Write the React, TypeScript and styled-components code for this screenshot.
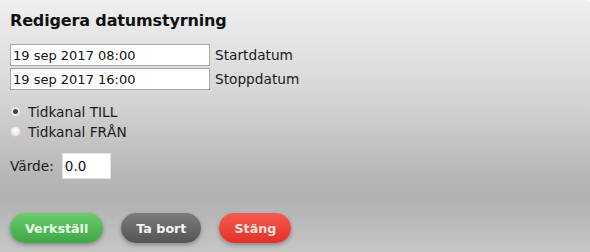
import React from "react";
import styled, { createGlobalStyle } from "styled-components";

const GlobalStyle = createGlobalStyle`
  html, body {
    margin: 0;
    padding: 0;
    background: #ffffff;
  }
`;

const App: React.FC = () => {
  return (
    <>
      <GlobalStyle />
      <Dialog>
        <Title>Redigera datumstyrning</Title>

        <DateRows>
          <DateRow>
            <TextInput defaultValue="19 sep 2017 08:00" />
            <Label>Startdatum</Label>
          </DateRow>
          <DateRow>
            <TextInput defaultValue="19 sep 2017 16:00" />
            <Label>Stoppdatum</Label>
          </DateRow>
        </DateRows>

        <RadioGroup>
          <RadioRow>
            <Radio checked />
            <Label>Tidkanal TILL</Label>
          </RadioRow>
          <RadioRow>
            <Radio />
            <Label>Tidkanal FRÅN</Label>
          </RadioRow>
        </RadioGroup>

        <ValueRow>
          <Label>Värde:</Label>
          <ValueInput defaultValue="0.0" />
        </ValueRow>

        <Buttons>
          <PillButton variant="green">Verkställ</PillButton>
          <PillButton variant="gray">Ta bort</PillButton>
          <PillButton variant="red">Stäng</PillButton>
        </Buttons>
      </Dialog>
    </>
  );
};

const Radio: React.FC<{ checked?: boolean }> = ({ checked }) => (
  <RadioCircle>{checked ? <RadioDot /> : null}</RadioCircle>
);

const Dialog = styled.div`
  box-sizing: border-box;
  width: 590px;
  height: 252px;
  padding: 11px 10px 0 10px;
  border-top-right-radius: 4px;
  background: linear-gradient(
    to bottom,
    #efefef 0%,
    #d8d8d8 35%,
    #b3b3b3 74%,
    #b2b2b2 80%,
    #c6c6c6 100%
  );
  font-family: "DejaVu Sans", Verdana, sans-serif;
  color: #111;
  display: flex;
  flex-direction: column;
  overflow: hidden;
`;

const Title = styled.h1`
  margin: 0;
  font-size: 16px;
  line-height: 20px;
  letter-spacing: -0.15px;
  font-weight: bold;
  color: #111;
`;

const DateRows = styled.div`
  display: flex;
  flex-direction: column;
  gap: 2px;
  margin-top: 13px;
`;

const DateRow = styled.div`
  display: flex;
  align-items: center;
  gap: 5px;
`;

const Label = styled.span`
  font-size: 13.7px;
  color: #1a1a1a;
`;

const TextInput = styled.input`
  box-sizing: border-box;
  width: 200px;
  height: 22px;
  margin: 0;
  padding: 0 2px;
  border: 1px solid #a9a9a9;
  background: #fff;
  font-family: "DejaVu Sans", Verdana, sans-serif;
  font-size: 13px;
  color: #111;
  outline: none;
`;

const RadioGroup = styled.div`
  display: flex;
  flex-direction: column;
  gap: 3px;
  margin-top: 13px;
`;

const RadioRow = styled.div`
  display: flex;
  align-items: center;
  gap: 7px;
  height: 17px;
`;

const RadioCircle = styled.span`
  box-sizing: border-box;
  width: 11px;
  height: 11px;
  border-radius: 50%;
  border: 1px solid #d0d0d0;
  background: radial-gradient(circle at 50% 40%, #ffffff 0%, #e6e6e6 70%, #cfcfcf 100%);
  display: flex;
  align-items: center;
  justify-content: center;
`;

const RadioDot = styled.span`
  width: 5px;
  height: 5px;
  border-radius: 50%;
  background: #444;
`;

const ValueRow = styled.div`
  display: flex;
  align-items: center;
  gap: 8px;
  margin-top: 13px;
`;

const ValueInput = styled.input`
  box-sizing: border-box;
  width: 49px;
  height: 26px;
  margin: 0;
  padding: 0 2px;
  border: 1px solid #e2e2e2;
  background: #fff;
  font-family: "DejaVu Sans", Verdana, sans-serif;
  font-size: 13.5px;
  color: #111;
  outline: none;
`;

const variants = {
  green: { top: "#6ccb6c", bottom: "#3ea646", text: "#e6ffe6" },
  gray: { top: "#7c7c7c", bottom: "#545454", text: "#f4f4f4" },
  red: { top: "#f65b50", bottom: "#e2302a", text: "#ffe2dc" },
};

const Buttons = styled.div`
  display: flex;
  align-items: center;
  gap: 18px;
  margin-top: 34px;
`;

const PillButton = styled.button<{ variant: keyof typeof variants }>`
  height: 30px;
  padding: 0 15px;
  border: none;
  border-radius: 15px;
  background: linear-gradient(
    to bottom,
    ${(p) => variants[p.variant].top},
    ${(p) => variants[p.variant].bottom}
  );
  box-shadow: 0 2px 4px rgba(0, 0, 0, 0.3);
  color: ${(p) => variants[p.variant].text};
  font-family: "DejaVu Sans", Verdana, sans-serif;
  font-size: 12.7px;
  font-weight: bold;
  cursor: pointer;
`;

export default App;
